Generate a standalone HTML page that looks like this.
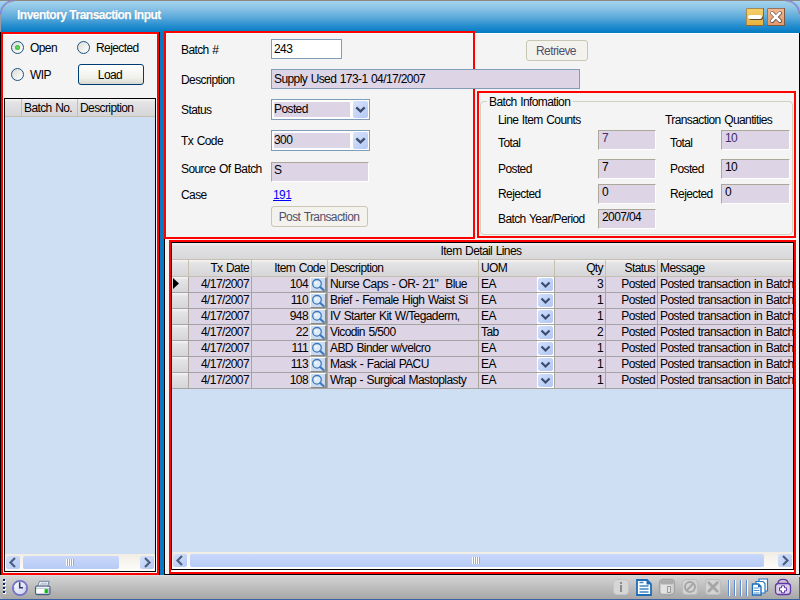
<!DOCTYPE html><html><head><meta charset="utf-8"><style>
*{margin:0;padding:0;box-sizing:border-box}
html,body{width:800px;height:600px;overflow:hidden;background:#0679c2}
body{position:relative;font-family:"Liberation Sans",sans-serif;font-size:11px;color:#000}
div,span,svg{position:absolute}
.t{white-space:pre;line-height:13px;height:13px;overflow:visible;letter-spacing:-0.6px;word-spacing:0.8px;font-size:12px}
</style></head><body>
<div style="left:0px;top:0px;width:800px;height:33px;background:linear-gradient(#a9d5f0 0px,#8cc4e6 8px,#58a8da 18px,#2a90d0 25px,#0a7fc6 31px,#0679c2 33px)"></div>
<div style="left:0px;top:0px;width:800px;height:1px;background:#8c8882"></div>
<div style="left:0px;top:13px;width:1px;height:19px;background:#9a9aa6"></div>
<svg style="left:0;top:0" width="800" height="33"><path d="M0.5 14 A13.5 13.5 0 0 1 14 0.5" stroke="#8080e8" stroke-width="1.2" fill="none"/><path d="M1.3 14 A12.7 12.7 0 0 1 14 1.3" stroke="#9a96a0" stroke-width="0.8" fill="none"/><path d="M786 0.5 A13.5 13.5 0 0 1 799.5 14" stroke="#8080e8" stroke-width="1.2" fill="none"/><path d="M786 1.3 A12.7 12.7 0 0 1 798.7 14" stroke="#9a96a0" stroke-width="0.8" fill="none"/></svg>
<div style="left:17px;top:9px;font-weight:bold;font-size:12px;letter-spacing:-0.5px;color:#fff;line-height:13px;white-space:pre;-webkit-text-stroke:0.25px #fff;text-shadow:0 0 1px #3070a0">Inventory Transaction Input</div>
<div style="left:746px;top:8px;width:18px;height:18px;background:linear-gradient(#f6cf6a,#e9b240);border:1px solid #a88a50;border-radius:1px"></div>
<div style="left:746px;top:8px;width:18px;height:18px;border-right:1px solid #8a6a30;border-bottom:1px solid #8a6a30"></div>
<div style="left:748px;top:15px;width:14px;height:4px;background:#fff;border-radius:2px;box-shadow:1px 1px 0 #5a4a30"></div>
<div style="left:767px;top:8px;width:18px;height:18px;background:linear-gradient(#f2b98f,#e39a6b);border:1px solid #9a7060;border-radius:1px"></div>
<div style="left:767px;top:8px;width:18px;height:18px;border-right:1px solid #7a5a44;border-bottom:1px solid #7a5a44"></div>
<svg style="left:767px;top:8px" width="18" height="18"><path d="M5.2 5.2 L13 13 M13 5.2 L5.2 13" stroke="#5e4e4a" stroke-width="4" stroke-linecap="round"/><path d="M5 5 L12.8 12.8 M12.8 5 L5 12.8" stroke="#fff" stroke-width="2.6" stroke-linecap="round"/></svg>
<div style="left:0px;top:32px;width:160px;height:543px;background:#f4f4f4"></div>
<div style="left:0px;top:32px;width:1px;height:543px;background:#000"></div>
<div style="left:159px;top:32px;width:1px;height:543px;background:#000"></div>
<div style="left:1px;top:32px;width:158px;height:2px;background:#ff0000"></div>
<div style="left:1px;top:573px;width:158px;height:2px;background:#ff0000"></div>
<div style="left:1px;top:32px;width:2px;height:543px;background:#ff0000"></div>
<div style="left:157px;top:32px;width:2px;height:543px;background:#ff0000"></div>
<div style="left:3px;top:34px;width:154px;height:1px;background:#fff"></div>
<div style="left:3px;top:34px;width:1px;height:538px;background:#fff"></div>
<div style="left:11px;top:41px;width:13px;height:13px;border-radius:50%;border:1px solid #1c5180;background:linear-gradient(135deg,#dcdcd6,#fff)"></div>
<div style="left:15px;top:45px;width:5px;height:5px;border-radius:50%;background:radial-gradient(#6fe06f,#21a121)"></div>
<div class="t" style="left:30px;top:42px;">Open</div>
<div style="left:77px;top:41px;width:13px;height:13px;border-radius:50%;border:1px solid #1c5180;background:linear-gradient(135deg,#dcdcd6,#fff)"></div>
<div class="t" style="left:96px;top:42px;">Rejected</div>
<div style="left:11px;top:68px;width:13px;height:13px;border-radius:50%;border:1px solid #1c5180;background:linear-gradient(135deg,#dcdcd6,#fff)"></div>
<div class="t" style="left:30px;top:69px;">WIP</div>
<div style="left:78px;top:64px;width:66px;height:21px;border:1px solid #003c74;border-radius:3px;background:linear-gradient(#fff,#f0f0ea 70%,#d8d8d0)"></div>
<div class="t" style="left:-40px;width:300px;text-align:center;top:69px;">Load</div>
<div style="left:4px;top:98px;width:152px;height:474px;background:#000"></div>
<div style="left:5px;top:99px;width:150px;height:472px;background:#cfdff3"></div>
<div style="left:5px;top:99px;width:150px;height:17px;background:linear-gradient(#f6f6f6 0px,#e4e4e6 3px,#d6d6d8 17px)"></div>
<div style="left:5px;top:116px;width:150px;height:1px;background:#c5bfaf"></div>
<div style="left:21px;top:99px;width:1px;height:17px;background:#c5bfaf"></div>
<div style="left:77px;top:99px;width:1px;height:17px;background:#c5bfaf"></div>
<div class="t" style="left:24px;top:102px;">Batch No.</div>
<div class="t" style="left:80px;top:102px;">Description</div>
<div style="left:5px;top:554px;width:150px;height:17px;background:linear-gradient(#f1ede4,#fdfdfa)"></div>
<div style="left:6px;top:556px;width:14px;height:13px;border-radius:2px;background:linear-gradient(135deg,#d5e1fb,#b4c9f3)"></div>
<svg style="left:6px;top:556px" width="14" height="13"><path d="M9 2 L4.5 6.5 L9 11" stroke="#4d5f80" stroke-width="2.2" fill="none"/></svg>
<div style="left:140px;top:556px;width:14px;height:13px;border-radius:2px;background:linear-gradient(135deg,#d5e1fb,#b4c9f3)"></div>
<svg style="left:140px;top:556px" width="14" height="13"><path d="M5 2 L9.5 6.5 L5 11" stroke="#4d5f80" stroke-width="2.2" fill="none"/></svg>
<div style="left:23px;top:556px;width:96px;height:13px;border-radius:2px;background:linear-gradient(#c9d7fa,#b6cbf5)"></div>
<div style="left:66px;top:559px;width:1px;height:7px;background:#fff"></div>
<div style="left:67px;top:559px;width:1px;height:7px;background:#8caee8"></div>
<div style="left:68px;top:559px;width:1px;height:7px;background:#fff"></div>
<div style="left:69px;top:559px;width:1px;height:7px;background:#8caee8"></div>
<div style="left:70px;top:559px;width:1px;height:7px;background:#fff"></div>
<div style="left:71px;top:559px;width:1px;height:7px;background:#8caee8"></div>
<div style="left:72px;top:559px;width:1px;height:7px;background:#fff"></div>
<div style="left:73px;top:559px;width:1px;height:7px;background:#8caee8"></div>
<div style="left:164px;top:33px;width:636px;height:542px;background:#f4f4f4"></div>
<div style="left:164px;top:239px;width:1px;height:336px;background:#000"></div>
<div style="left:799px;top:33px;width:1px;height:542px;background:#000"></div>
<div style="left:164px;top:574px;width:636px;height:1px;background:#000"></div>
<div style="left:475px;top:33px;width:324px;height:1px;background:#fbfdfd"></div>
<div style="left:164px;top:31px;width:311px;height:2px;background:#ff0000"></div>
<div style="left:164px;top:237px;width:311px;height:2px;background:#ff0000"></div>
<div style="left:164px;top:31px;width:2px;height:208px;background:#ff0000"></div>
<div style="left:473px;top:31px;width:2px;height:208px;background:#ff0000"></div>
<div style="left:166px;top:33px;width:307px;height:1px;background:#fbfdfd"></div>
<div style="left:166px;top:33px;width:1px;height:204px;background:#fbfdfd"></div>
<div class="t" style="left:181px;top:44px;">Batch #</div>
<div style="left:271px;top:39px;width:71px;height:20px;background:#fff;border:1px solid #7f9db9"></div>
<div class="t" style="left:274px;top:43px;">243</div>
<div class="t" style="left:181px;top:74px;">Description</div>
<div style="left:271px;top:69px;width:309px;height:20px;background:#ddd4e6;border:1px solid #7f9db9"></div>
<div class="t" style="left:274px;top:73px;">Supply Used 173-1 04/17/2007</div>
<div class="t" style="left:181px;top:104px;">Status</div>
<div style="left:271px;top:99px;width:99px;height:21px;background:#fff;border:1px solid #7f9db9"></div>
<div style="left:274px;top:102px;width:76px;height:15px;background:#ddd4e6"></div>
<div style="left:353px;top:101px;width:15px;height:17px;border-radius:2px;background:linear-gradient(135deg,#d9e4fb,#b3c8f4)"></div>
<svg style="left:353px;top:101px" width="15" height="17"><path d="M3.3 6.3 L7.5 10.3 L11.7 6.3" stroke="#3d4d6d" stroke-width="2.3" fill="none"/></svg>
<div class="t" style="left:274px;top:103px;">Posted</div>
<div class="t" style="left:181px;top:135px;">Tx Code</div>
<div style="left:271px;top:130px;width:99px;height:21px;background:#fff;border:1px solid #7f9db9"></div>
<div style="left:274px;top:133px;width:76px;height:15px;background:#ddd4e6"></div>
<div style="left:353px;top:132px;width:15px;height:17px;border-radius:2px;background:linear-gradient(135deg,#d9e4fb,#b3c8f4)"></div>
<svg style="left:353px;top:132px" width="15" height="17"><path d="M3.3 6.3 L7.5 10.3 L11.7 6.3" stroke="#3d4d6d" stroke-width="2.3" fill="none"/></svg>
<div class="t" style="left:274px;top:134px;">300</div>
<div class="t" style="left:181px;top:163px;">Source Of Batch</div>
<div style="left:271px;top:162px;width:98px;height:20px;background:#ddd4e6;border-top:1px solid #aca899;border-left:1px solid #aca899;border-bottom:1px solid #fff;border-right:1px solid #fff"></div>
<div class="t" style="left:274px;top:164px;">S</div>
<div class="t" style="left:181px;top:189px;">Case</div>
<div class="t" style="left:273px;top:189px;color:#0000ff;text-decoration:underline">191</div>
<div style="left:271px;top:206px;width:97px;height:21px;border:1px solid #c9c6b4;border-radius:3px;background:#f3f2ec"></div>
<div class="t" style="left:169px;width:300px;text-align:center;top:211px;color:#50506c">Post Transaction</div>
<div style="left:526px;top:40px;width:62px;height:21px;border:1px solid #c9c6b4;border-radius:3px;background:#f3f2ec"></div>
<div class="t" style="left:406px;width:300px;text-align:center;top:45px;color:#50506c">Retrieve</div>
<div style="left:477px;top:91px;width:319px;height:2px;background:#ff0000"></div>
<div style="left:477px;top:236px;width:319px;height:2px;background:#ff0000"></div>
<div style="left:477px;top:91px;width:2px;height:147px;background:#ff0000"></div>
<div style="left:794px;top:91px;width:2px;height:147px;background:#ff0000"></div>
<div style="left:480px;top:101px;width:313px;height:134px;border:1px solid #d0d0bf;border-radius:4px"></div>
<div style="left:487px;top:96px;width:86px;height:10px;background:#f4f4f4"></div>
<div class="t" style="left:489px;top:96px;">Batch Infomation</div>
<div class="t" style="left:498px;top:114px;">Line Item Counts</div>
<div class="t" style="left:665px;top:114px;">Transaction Quantities</div>
<div class="t" style="left:498px;top:137px;">Total</div>
<div style="left:598px;top:130px;width:58px;height:20px;background:#ddd4e6;border-top:1px solid #aca899;border-left:1px solid #aca899;border-bottom:1px solid #fff;border-right:1px solid #fff"></div>
<div class="t" style="left:602px;top:132px;color:#402e70">7</div>
<div class="t" style="left:498px;top:163px;">Posted</div>
<div style="left:598px;top:159px;width:58px;height:20px;background:#ddd4e6;border-top:1px solid #aca899;border-left:1px solid #aca899;border-bottom:1px solid #fff;border-right:1px solid #fff"></div>
<div class="t" style="left:602px;top:161px;color:#000">7</div>
<div class="t" style="left:498px;top:188px;">Rejected</div>
<div style="left:598px;top:184px;width:58px;height:20px;background:#ddd4e6;border-top:1px solid #aca899;border-left:1px solid #aca899;border-bottom:1px solid #fff;border-right:1px solid #fff"></div>
<div class="t" style="left:602px;top:186px;color:#000">0</div>
<div class="t" style="left:498px;top:213px;">Batch Year/Period</div>
<div style="left:598px;top:209px;width:58px;height:20px;background:#ddd4e6;border-top:1px solid #aca899;border-left:1px solid #aca899;border-bottom:1px solid #fff;border-right:1px solid #fff"></div>
<div class="t" style="left:602px;top:211px;color:#000">2007/04</div>
<div class="t" style="left:670px;top:137px;">Total</div>
<div style="left:721px;top:130px;width:69px;height:20px;background:#ddd4e6;border-top:1px solid #aca899;border-left:1px solid #aca899;border-bottom:1px solid #fff;border-right:1px solid #fff"></div>
<div class="t" style="left:725px;top:132px;color:#402e70">10</div>
<div class="t" style="left:670px;top:163px;">Posted</div>
<div style="left:721px;top:159px;width:69px;height:20px;background:#ddd4e6;border-top:1px solid #aca899;border-left:1px solid #aca899;border-bottom:1px solid #fff;border-right:1px solid #fff"></div>
<div class="t" style="left:725px;top:161px;color:#000">10</div>
<div class="t" style="left:670px;top:188px;">Rejected</div>
<div style="left:721px;top:184px;width:69px;height:20px;background:#ddd4e6;border-top:1px solid #aca899;border-left:1px solid #aca899;border-bottom:1px solid #fff;border-right:1px solid #fff"></div>
<div class="t" style="left:725px;top:186px;color:#000">0</div>
<div style="left:169px;top:240px;width:627px;height:2px;background:#ff0000"></div>
<div style="left:169px;top:572px;width:627px;height:2px;background:#ff0000"></div>
<div style="left:169px;top:240px;width:2px;height:334px;background:#ff0000"></div>
<div style="left:794px;top:240px;width:2px;height:334px;background:#ff0000"></div>
<div style="left:171px;top:570px;width:623px;height:2px;background:#fff"></div>
<div style="left:171px;top:242px;width:623px;height:328px;background:#000"></div>
<div style="left:172px;top:243px;width:621px;height:326px;background:#cfdff3"></div>
<div style="left:172px;top:243px;width:621px;height:16px;background:linear-gradient(#f2f2f2 0px,#e2e2e4 3px,#d8d8da 16px)"></div>
<div style="left:172px;top:259px;width:621px;height:1px;background:#c5bfaf"></div>
<div class="t" style="left:331px;width:300px;text-align:center;top:245px;">Item Detail Lines</div>
<div style="left:172px;top:260px;width:621px;height:16px;background:linear-gradient(#f6f6f6 0px,#e4e4e6 3px,#d6d6d8 16px)"></div>
<div style="left:172px;top:276px;width:621px;height:1px;background:#c5bfaf"></div>
<div style="left:188px;top:260px;width:1px;height:17px;background:#c5bfaf"></div>
<div style="left:251px;top:260px;width:1px;height:17px;background:#c5bfaf"></div>
<div style="left:327px;top:260px;width:1px;height:17px;background:#c5bfaf"></div>
<div style="left:478px;top:260px;width:1px;height:17px;background:#c5bfaf"></div>
<div style="left:554px;top:260px;width:1px;height:17px;background:#c5bfaf"></div>
<div style="left:605px;top:260px;width:1px;height:17px;background:#c5bfaf"></div>
<div style="left:657px;top:260px;width:1px;height:17px;background:#c5bfaf"></div>
<div class="t" style="left:-51px;width:300px;text-align:right;top:262px;">Tx Date</div>
<div class="t" style="left:25px;width:300px;text-align:right;top:262px;">Item Code</div>
<div class="t" style="left:330px;top:262px;">Description</div>
<div class="t" style="left:481px;top:262px;">UOM</div>
<div class="t" style="left:303px;width:300px;text-align:right;top:262px;">Qty</div>
<div class="t" style="left:355px;width:300px;text-align:right;top:262px;">Status</div>
<div class="t" style="left:660px;top:262px;">Message</div>
<div style="left:172px;top:277px;width:16px;height:15px;background:linear-gradient(#f6f6f6 0px,#e4e4e6 3px,#d6d6d8 15px)"></div>
<div style="left:188px;top:277px;width:605px;height:15px;background:#ddd4e6"></div>
<div style="left:172px;top:292px;width:621px;height:1px;background:#a4a4a4"></div>
<div style="left:188px;top:277px;width:1px;height:16px;background:#a8a69c"></div>
<div style="left:251px;top:277px;width:1px;height:16px;background:#a8a69c"></div>
<div style="left:327px;top:277px;width:1px;height:16px;background:#a8a69c"></div>
<div style="left:478px;top:277px;width:1px;height:16px;background:#a8a69c"></div>
<div style="left:554px;top:277px;width:1px;height:16px;background:#a8a69c"></div>
<div style="left:605px;top:277px;width:1px;height:16px;background:#a8a69c"></div>
<div style="left:657px;top:277px;width:1px;height:16px;background:#a8a69c"></div>
<div class="t" style="left:-51px;width:300px;text-align:right;top:278px;">4/17/2007</div>
<div class="t" style="left:8px;width:300px;text-align:right;top:278px;">104</div>
<div style="left:310px;top:277px;width:17px;height:15px;background:#c9dcf3;border-top:1px solid #fbfaf2;border-left:1px solid #fbfaf2;border-right:2px solid #8c8a80;border-bottom:1px solid #8c8a80"></div>
<svg style="left:310px;top:277px" width="17" height="15"><circle cx="7" cy="6.8" r="4.3" stroke="#4077b8" stroke-width="1.3" fill="#dcebf8"/><circle cx="5.6" cy="5.8" r="1" fill="#fff"/><path d="M10.2 10 L13.6 13" stroke="#4077b8" stroke-width="2.2" stroke-linecap="round"/></svg>
<div class="t" style="left:330px;top:278px;">Nurse Caps - OR- 21"  Blue</div>
<div class="t" style="left:481px;top:278px;">EA</div>
<div style="left:537px;top:277px;width:17px;height:15px;background:#fff"></div>
<div style="left:538px;top:278px;width:15px;height:13px;border-radius:2px;background:linear-gradient(135deg,#d3e0fb,#b0c6f3)"></div>
<svg style="left:538px;top:278px" width="15" height="13"><path d="M3.5 4.5 L7.5 8.5 L11.5 4.5" stroke="#3d4d6d" stroke-width="2.2" fill="none"/></svg>
<div class="t" style="left:303px;width:300px;text-align:right;top:278px;">3</div>
<div class="t" style="left:355px;width:300px;text-align:right;top:278px;">Posted</div>
<div style="left:658px;top:277px;width:135px;height:15px;overflow:hidden"><div class="t" style="left:2px;top:1px;letter-spacing:-0.55px">Posted transaction in Batch 243</div></div>
<div style="left:172px;top:293px;width:16px;height:15px;background:linear-gradient(#f6f6f6 0px,#e4e4e6 3px,#d6d6d8 15px)"></div>
<div style="left:188px;top:293px;width:605px;height:15px;background:#ddd4e6"></div>
<div style="left:172px;top:308px;width:621px;height:1px;background:#a4a4a4"></div>
<div style="left:188px;top:293px;width:1px;height:16px;background:#a8a69c"></div>
<div style="left:251px;top:293px;width:1px;height:16px;background:#a8a69c"></div>
<div style="left:327px;top:293px;width:1px;height:16px;background:#a8a69c"></div>
<div style="left:478px;top:293px;width:1px;height:16px;background:#a8a69c"></div>
<div style="left:554px;top:293px;width:1px;height:16px;background:#a8a69c"></div>
<div style="left:605px;top:293px;width:1px;height:16px;background:#a8a69c"></div>
<div style="left:657px;top:293px;width:1px;height:16px;background:#a8a69c"></div>
<div class="t" style="left:-51px;width:300px;text-align:right;top:294px;">4/17/2007</div>
<div class="t" style="left:8px;width:300px;text-align:right;top:294px;">110</div>
<div style="left:310px;top:293px;width:17px;height:15px;background:#c9dcf3;border-top:1px solid #fbfaf2;border-left:1px solid #fbfaf2;border-right:2px solid #8c8a80;border-bottom:1px solid #8c8a80"></div>
<svg style="left:310px;top:293px" width="17" height="15"><circle cx="7" cy="6.8" r="4.3" stroke="#4077b8" stroke-width="1.3" fill="#dcebf8"/><circle cx="5.6" cy="5.8" r="1" fill="#fff"/><path d="M10.2 10 L13.6 13" stroke="#4077b8" stroke-width="2.2" stroke-linecap="round"/></svg>
<div class="t" style="left:330px;top:294px;">Brief - Female High Waist Si</div>
<div class="t" style="left:481px;top:294px;">EA</div>
<div style="left:537px;top:293px;width:17px;height:15px;background:#fff"></div>
<div style="left:538px;top:294px;width:15px;height:13px;border-radius:2px;background:linear-gradient(135deg,#d3e0fb,#b0c6f3)"></div>
<svg style="left:538px;top:294px" width="15" height="13"><path d="M3.5 4.5 L7.5 8.5 L11.5 4.5" stroke="#3d4d6d" stroke-width="2.2" fill="none"/></svg>
<div class="t" style="left:303px;width:300px;text-align:right;top:294px;">1</div>
<div class="t" style="left:355px;width:300px;text-align:right;top:294px;">Posted</div>
<div style="left:658px;top:293px;width:135px;height:15px;overflow:hidden"><div class="t" style="left:2px;top:1px;letter-spacing:-0.55px">Posted transaction in Batch 243</div></div>
<div style="left:172px;top:309px;width:16px;height:15px;background:linear-gradient(#f6f6f6 0px,#e4e4e6 3px,#d6d6d8 15px)"></div>
<div style="left:188px;top:309px;width:605px;height:15px;background:#ddd4e6"></div>
<div style="left:172px;top:324px;width:621px;height:1px;background:#a4a4a4"></div>
<div style="left:188px;top:309px;width:1px;height:16px;background:#a8a69c"></div>
<div style="left:251px;top:309px;width:1px;height:16px;background:#a8a69c"></div>
<div style="left:327px;top:309px;width:1px;height:16px;background:#a8a69c"></div>
<div style="left:478px;top:309px;width:1px;height:16px;background:#a8a69c"></div>
<div style="left:554px;top:309px;width:1px;height:16px;background:#a8a69c"></div>
<div style="left:605px;top:309px;width:1px;height:16px;background:#a8a69c"></div>
<div style="left:657px;top:309px;width:1px;height:16px;background:#a8a69c"></div>
<div class="t" style="left:-51px;width:300px;text-align:right;top:310px;">4/17/2007</div>
<div class="t" style="left:8px;width:300px;text-align:right;top:310px;">948</div>
<div style="left:310px;top:309px;width:17px;height:15px;background:#c9dcf3;border-top:1px solid #fbfaf2;border-left:1px solid #fbfaf2;border-right:2px solid #8c8a80;border-bottom:1px solid #8c8a80"></div>
<svg style="left:310px;top:309px" width="17" height="15"><circle cx="7" cy="6.8" r="4.3" stroke="#4077b8" stroke-width="1.3" fill="#dcebf8"/><circle cx="5.6" cy="5.8" r="1" fill="#fff"/><path d="M10.2 10 L13.6 13" stroke="#4077b8" stroke-width="2.2" stroke-linecap="round"/></svg>
<div class="t" style="left:330px;top:310px;">IV Starter Kit W/Tegaderm,</div>
<div class="t" style="left:481px;top:310px;">EA</div>
<div style="left:537px;top:309px;width:17px;height:15px;background:#fff"></div>
<div style="left:538px;top:310px;width:15px;height:13px;border-radius:2px;background:linear-gradient(135deg,#d3e0fb,#b0c6f3)"></div>
<svg style="left:538px;top:310px" width="15" height="13"><path d="M3.5 4.5 L7.5 8.5 L11.5 4.5" stroke="#3d4d6d" stroke-width="2.2" fill="none"/></svg>
<div class="t" style="left:303px;width:300px;text-align:right;top:310px;">1</div>
<div class="t" style="left:355px;width:300px;text-align:right;top:310px;">Posted</div>
<div style="left:658px;top:309px;width:135px;height:15px;overflow:hidden"><div class="t" style="left:2px;top:1px;letter-spacing:-0.55px">Posted transaction in Batch 243</div></div>
<div style="left:172px;top:325px;width:16px;height:15px;background:linear-gradient(#f6f6f6 0px,#e4e4e6 3px,#d6d6d8 15px)"></div>
<div style="left:188px;top:325px;width:605px;height:15px;background:#ddd4e6"></div>
<div style="left:172px;top:340px;width:621px;height:1px;background:#a4a4a4"></div>
<div style="left:188px;top:325px;width:1px;height:16px;background:#a8a69c"></div>
<div style="left:251px;top:325px;width:1px;height:16px;background:#a8a69c"></div>
<div style="left:327px;top:325px;width:1px;height:16px;background:#a8a69c"></div>
<div style="left:478px;top:325px;width:1px;height:16px;background:#a8a69c"></div>
<div style="left:554px;top:325px;width:1px;height:16px;background:#a8a69c"></div>
<div style="left:605px;top:325px;width:1px;height:16px;background:#a8a69c"></div>
<div style="left:657px;top:325px;width:1px;height:16px;background:#a8a69c"></div>
<div class="t" style="left:-51px;width:300px;text-align:right;top:326px;">4/17/2007</div>
<div class="t" style="left:8px;width:300px;text-align:right;top:326px;">22</div>
<div style="left:310px;top:325px;width:17px;height:15px;background:#c9dcf3;border-top:1px solid #fbfaf2;border-left:1px solid #fbfaf2;border-right:2px solid #8c8a80;border-bottom:1px solid #8c8a80"></div>
<svg style="left:310px;top:325px" width="17" height="15"><circle cx="7" cy="6.8" r="4.3" stroke="#4077b8" stroke-width="1.3" fill="#dcebf8"/><circle cx="5.6" cy="5.8" r="1" fill="#fff"/><path d="M10.2 10 L13.6 13" stroke="#4077b8" stroke-width="2.2" stroke-linecap="round"/></svg>
<div class="t" style="left:330px;top:326px;">Vicodin 5/500</div>
<div class="t" style="left:481px;top:326px;">Tab</div>
<div style="left:537px;top:325px;width:17px;height:15px;background:#fff"></div>
<div style="left:538px;top:326px;width:15px;height:13px;border-radius:2px;background:linear-gradient(135deg,#d3e0fb,#b0c6f3)"></div>
<svg style="left:538px;top:326px" width="15" height="13"><path d="M3.5 4.5 L7.5 8.5 L11.5 4.5" stroke="#3d4d6d" stroke-width="2.2" fill="none"/></svg>
<div class="t" style="left:303px;width:300px;text-align:right;top:326px;">2</div>
<div class="t" style="left:355px;width:300px;text-align:right;top:326px;">Posted</div>
<div style="left:658px;top:325px;width:135px;height:15px;overflow:hidden"><div class="t" style="left:2px;top:1px;letter-spacing:-0.55px">Posted transaction in Batch 243</div></div>
<div style="left:172px;top:341px;width:16px;height:15px;background:linear-gradient(#f6f6f6 0px,#e4e4e6 3px,#d6d6d8 15px)"></div>
<div style="left:188px;top:341px;width:605px;height:15px;background:#ddd4e6"></div>
<div style="left:172px;top:356px;width:621px;height:1px;background:#a4a4a4"></div>
<div style="left:188px;top:341px;width:1px;height:16px;background:#a8a69c"></div>
<div style="left:251px;top:341px;width:1px;height:16px;background:#a8a69c"></div>
<div style="left:327px;top:341px;width:1px;height:16px;background:#a8a69c"></div>
<div style="left:478px;top:341px;width:1px;height:16px;background:#a8a69c"></div>
<div style="left:554px;top:341px;width:1px;height:16px;background:#a8a69c"></div>
<div style="left:605px;top:341px;width:1px;height:16px;background:#a8a69c"></div>
<div style="left:657px;top:341px;width:1px;height:16px;background:#a8a69c"></div>
<div class="t" style="left:-51px;width:300px;text-align:right;top:342px;">4/17/2007</div>
<div class="t" style="left:8px;width:300px;text-align:right;top:342px;">111</div>
<div style="left:310px;top:341px;width:17px;height:15px;background:#c9dcf3;border-top:1px solid #fbfaf2;border-left:1px solid #fbfaf2;border-right:2px solid #8c8a80;border-bottom:1px solid #8c8a80"></div>
<svg style="left:310px;top:341px" width="17" height="15"><circle cx="7" cy="6.8" r="4.3" stroke="#4077b8" stroke-width="1.3" fill="#dcebf8"/><circle cx="5.6" cy="5.8" r="1" fill="#fff"/><path d="M10.2 10 L13.6 13" stroke="#4077b8" stroke-width="2.2" stroke-linecap="round"/></svg>
<div class="t" style="left:330px;top:342px;">ABD Binder w/velcro</div>
<div class="t" style="left:481px;top:342px;">EA</div>
<div style="left:537px;top:341px;width:17px;height:15px;background:#fff"></div>
<div style="left:538px;top:342px;width:15px;height:13px;border-radius:2px;background:linear-gradient(135deg,#d3e0fb,#b0c6f3)"></div>
<svg style="left:538px;top:342px" width="15" height="13"><path d="M3.5 4.5 L7.5 8.5 L11.5 4.5" stroke="#3d4d6d" stroke-width="2.2" fill="none"/></svg>
<div class="t" style="left:303px;width:300px;text-align:right;top:342px;">1</div>
<div class="t" style="left:355px;width:300px;text-align:right;top:342px;">Posted</div>
<div style="left:658px;top:341px;width:135px;height:15px;overflow:hidden"><div class="t" style="left:2px;top:1px;letter-spacing:-0.55px">Posted transaction in Batch 243</div></div>
<div style="left:172px;top:357px;width:16px;height:15px;background:linear-gradient(#f6f6f6 0px,#e4e4e6 3px,#d6d6d8 15px)"></div>
<div style="left:188px;top:357px;width:605px;height:15px;background:#ddd4e6"></div>
<div style="left:172px;top:372px;width:621px;height:1px;background:#a4a4a4"></div>
<div style="left:188px;top:357px;width:1px;height:16px;background:#a8a69c"></div>
<div style="left:251px;top:357px;width:1px;height:16px;background:#a8a69c"></div>
<div style="left:327px;top:357px;width:1px;height:16px;background:#a8a69c"></div>
<div style="left:478px;top:357px;width:1px;height:16px;background:#a8a69c"></div>
<div style="left:554px;top:357px;width:1px;height:16px;background:#a8a69c"></div>
<div style="left:605px;top:357px;width:1px;height:16px;background:#a8a69c"></div>
<div style="left:657px;top:357px;width:1px;height:16px;background:#a8a69c"></div>
<div class="t" style="left:-51px;width:300px;text-align:right;top:358px;">4/17/2007</div>
<div class="t" style="left:8px;width:300px;text-align:right;top:358px;">113</div>
<div style="left:310px;top:357px;width:17px;height:15px;background:#c9dcf3;border-top:1px solid #fbfaf2;border-left:1px solid #fbfaf2;border-right:2px solid #8c8a80;border-bottom:1px solid #8c8a80"></div>
<svg style="left:310px;top:357px" width="17" height="15"><circle cx="7" cy="6.8" r="4.3" stroke="#4077b8" stroke-width="1.3" fill="#dcebf8"/><circle cx="5.6" cy="5.8" r="1" fill="#fff"/><path d="M10.2 10 L13.6 13" stroke="#4077b8" stroke-width="2.2" stroke-linecap="round"/></svg>
<div class="t" style="left:330px;top:358px;">Mask - Facial PACU</div>
<div class="t" style="left:481px;top:358px;">EA</div>
<div style="left:537px;top:357px;width:17px;height:15px;background:#fff"></div>
<div style="left:538px;top:358px;width:15px;height:13px;border-radius:2px;background:linear-gradient(135deg,#d3e0fb,#b0c6f3)"></div>
<svg style="left:538px;top:358px" width="15" height="13"><path d="M3.5 4.5 L7.5 8.5 L11.5 4.5" stroke="#3d4d6d" stroke-width="2.2" fill="none"/></svg>
<div class="t" style="left:303px;width:300px;text-align:right;top:358px;">1</div>
<div class="t" style="left:355px;width:300px;text-align:right;top:358px;">Posted</div>
<div style="left:658px;top:357px;width:135px;height:15px;overflow:hidden"><div class="t" style="left:2px;top:1px;letter-spacing:-0.55px">Posted transaction in Batch 243</div></div>
<div style="left:172px;top:373px;width:16px;height:15px;background:linear-gradient(#f6f6f6 0px,#e4e4e6 3px,#d6d6d8 15px)"></div>
<div style="left:188px;top:373px;width:605px;height:15px;background:#ddd4e6"></div>
<div style="left:172px;top:388px;width:621px;height:1px;background:#a4a4a4"></div>
<div style="left:188px;top:373px;width:1px;height:16px;background:#a8a69c"></div>
<div style="left:251px;top:373px;width:1px;height:16px;background:#a8a69c"></div>
<div style="left:327px;top:373px;width:1px;height:16px;background:#a8a69c"></div>
<div style="left:478px;top:373px;width:1px;height:16px;background:#a8a69c"></div>
<div style="left:554px;top:373px;width:1px;height:16px;background:#a8a69c"></div>
<div style="left:605px;top:373px;width:1px;height:16px;background:#a8a69c"></div>
<div style="left:657px;top:373px;width:1px;height:16px;background:#a8a69c"></div>
<div class="t" style="left:-51px;width:300px;text-align:right;top:374px;">4/17/2007</div>
<div class="t" style="left:8px;width:300px;text-align:right;top:374px;">108</div>
<div style="left:310px;top:373px;width:17px;height:15px;background:#c9dcf3;border-top:1px solid #fbfaf2;border-left:1px solid #fbfaf2;border-right:2px solid #8c8a80;border-bottom:1px solid #8c8a80"></div>
<svg style="left:310px;top:373px" width="17" height="15"><circle cx="7" cy="6.8" r="4.3" stroke="#4077b8" stroke-width="1.3" fill="#dcebf8"/><circle cx="5.6" cy="5.8" r="1" fill="#fff"/><path d="M10.2 10 L13.6 13" stroke="#4077b8" stroke-width="2.2" stroke-linecap="round"/></svg>
<div class="t" style="left:330px;top:374px;">Wrap - Surgical Mastoplasty</div>
<div class="t" style="left:481px;top:374px;">EA</div>
<div style="left:537px;top:373px;width:17px;height:15px;background:#fff"></div>
<div style="left:538px;top:374px;width:15px;height:13px;border-radius:2px;background:linear-gradient(135deg,#d3e0fb,#b0c6f3)"></div>
<svg style="left:538px;top:374px" width="15" height="13"><path d="M3.5 4.5 L7.5 8.5 L11.5 4.5" stroke="#3d4d6d" stroke-width="2.2" fill="none"/></svg>
<div class="t" style="left:303px;width:300px;text-align:right;top:374px;">1</div>
<div class="t" style="left:355px;width:300px;text-align:right;top:374px;">Posted</div>
<div style="left:658px;top:373px;width:135px;height:15px;overflow:hidden"><div class="t" style="left:2px;top:1px;letter-spacing:-0.55px">Posted transaction in Batch 243</div></div>
<svg style="left:173px;top:278px" width="8" height="12"><path d="M0 0 L6 5.5 L0 11 Z" fill="#000"/></svg>
<div style="left:172px;top:552px;width:621px;height:17px;background:linear-gradient(#f1ede4,#fdfdfa)"></div>
<div style="left:173px;top:554px;width:14px;height:13px;border-radius:2px;background:linear-gradient(135deg,#d5e1fb,#b4c9f3)"></div>
<svg style="left:173px;top:554px" width="14" height="13"><path d="M9 2 L4.5 6.5 L9 11" stroke="#4d5f80" stroke-width="2.2" fill="none"/></svg>
<div style="left:778px;top:554px;width:14px;height:13px;border-radius:2px;background:linear-gradient(135deg,#d5e1fb,#b4c9f3)"></div>
<svg style="left:778px;top:554px" width="14" height="13"><path d="M5 2 L9.5 6.5 L5 11" stroke="#4d5f80" stroke-width="2.2" fill="none"/></svg>
<div style="left:190px;top:554px;width:574px;height:13px;border-radius:2px;background:linear-gradient(#c9d7fa,#b6cbf5)"></div>
<div style="left:472px;top:557px;width:1px;height:7px;background:#fff"></div>
<div style="left:473px;top:557px;width:1px;height:7px;background:#8caee8"></div>
<div style="left:474px;top:557px;width:1px;height:7px;background:#fff"></div>
<div style="left:475px;top:557px;width:1px;height:7px;background:#8caee8"></div>
<div style="left:476px;top:557px;width:1px;height:7px;background:#fff"></div>
<div style="left:477px;top:557px;width:1px;height:7px;background:#8caee8"></div>
<div style="left:478px;top:557px;width:1px;height:7px;background:#fff"></div>
<div style="left:479px;top:557px;width:1px;height:7px;background:#8caee8"></div>
<div style="left:0px;top:575px;width:800px;height:25px;background:linear-gradient(#e2e2e2 0px,#d4d4d4 1px,#a6a6a6 24px)"></div>
<div style="left:0px;top:599px;width:800px;height:1px;background:#3a60a6"></div>
<div style="left:3px;top:579px;width:2px;height:2px;background:#0a246a"></div>
<div style="left:5px;top:580px;width:1px;height:2px;background:#fff"></div>
<div style="left:3px;top:581px;width:3px;height:1px;background:#fff"></div>
<div style="left:3px;top:583px;width:2px;height:2px;background:#0a246a"></div>
<div style="left:5px;top:584px;width:1px;height:2px;background:#fff"></div>
<div style="left:3px;top:585px;width:3px;height:1px;background:#fff"></div>
<div style="left:3px;top:587px;width:2px;height:2px;background:#0a246a"></div>
<div style="left:5px;top:588px;width:1px;height:2px;background:#fff"></div>
<div style="left:3px;top:589px;width:3px;height:1px;background:#fff"></div>
<div style="left:3px;top:591px;width:2px;height:2px;background:#0a246a"></div>
<div style="left:5px;top:592px;width:1px;height:2px;background:#fff"></div>
<div style="left:3px;top:593px;width:3px;height:1px;background:#fff"></div>
<div style="left:0px;top:597px;width:1px;height:1px;background:#a8c8e8"></div>
<div style="left:1px;top:598px;width:1px;height:1px;background:#a8c8e8"></div>
<svg style="left:11px;top:579px" width="18" height="18"><defs><linearGradient id="cg" x1="0" y1="0" x2="1" y2="1"><stop offset="0" stop-color="#ffffff"/><stop offset="1" stop-color="#c8d0ec"/></linearGradient></defs><circle cx="9" cy="9" r="7.1" fill="url(#cg)" stroke="#7272c6" stroke-width="1.8"/><path d="M8.7 3.2 V8.7 H12" stroke="#35356f" stroke-width="1.5" fill="none"/><path d="M9 15 V16 M2.5 9 H3.5 M14.5 9 H15.5" stroke="#7070c0" stroke-width="1"/></svg>
<svg style="left:34px;top:580px" width="18" height="16"><path d="M5.5 1.3 H15.2 L13.6 6.5 H3.6 Z" fill="#fbfcfe" stroke="#6d7f9c" stroke-width="1"/><path d="M6.6 3.2 H13.4 M5.8 4.9 H12.7" stroke="#9aa8c0" stroke-width="0.9"/><rect x="1.5" y="6" width="14.5" height="8.6" rx="1.6" fill="#b8c4d8" stroke="#4b5d7d" stroke-width="1.1"/><path d="M2.2 7.6 H15.3" stroke="#eef2f8" stroke-width="1.3"/><rect x="2.3" y="9" width="8.7" height="4.2" fill="#ffffff"/><rect x="10.6" y="9.2" width="3.2" height="3.8" fill="#10c010"/></svg>
<div style="left:613px;top:579px;width:16px;height:16px;border:1px solid #c4c4c4;border-radius:4px;background:#d6d6d6"></div>
<div style="left:620px;top:582px;width:2px;height:2px;background:#8c8c8c"></div>
<div style="left:620px;top:585px;width:2px;height:7px;background:#8c8c8c"></div>
<svg style="left:636px;top:579px" width="16" height="17"><path d="M1 1 H11 L15 5 V16 H1 Z" fill="#ffffff" stroke="#1f6db8" stroke-width="1.8"/><path d="M10.5 1 L15 5.5 H10.5 Z" fill="#1f6db8"/><path d="M3.5 3.5 H7.5 M3.5 7 H12.5 M3.5 10 H12.5 M3.5 13 H12.5" stroke="#3c86c8" stroke-width="1.4"/></svg>
<svg style="left:658px;top:578px" width="18" height="18"><rect x="1.5" y="1.5" width="15" height="15" rx="3.5" fill="#d2d2d2" stroke="#a4a4a4" stroke-width="1.4"/><rect x="2.2" y="2.2" width="13.6" height="4" rx="2" fill="#acacac"/><rect x="3" y="7" width="10" height="8.5" fill="#e2e2e2"/><rect x="9.5" y="8.5" width="3" height="6" fill="none" stroke="#9a9a9a" stroke-width="1"/></svg>
<svg style="left:681px;top:578px" width="18" height="18"><rect x="1.5" y="1.5" width="15" height="15" rx="3.5" fill="#d4d4d4" stroke="#bdbdbd" stroke-width="1.2"/><circle cx="9" cy="9" r="5" fill="none" stroke="#a6a6a6" stroke-width="2"/><path d="M5.8 12.2 L12.2 5.8" stroke="#a6a6a6" stroke-width="2"/></svg>
<svg style="left:704px;top:578px" width="18" height="18"><rect x="1.5" y="1.5" width="15" height="15" rx="3.5" fill="#d4d4d4" stroke="#bdbdbd" stroke-width="1.2"/><path d="M4.8 4.8 L13.2 13.2 M13.2 4.8 L4.8 13.2" stroke="#a6a6a6" stroke-width="2.8" stroke-linecap="round"/></svg>
<div style="left:728px;top:580px;width:1px;height:16px;background:#5b8ad8"></div>
<div style="left:729px;top:580px;width:1px;height:16px;background:#ffffff"></div>
<div style="left:734px;top:580px;width:1px;height:16px;background:#5b8ad8"></div>
<div style="left:735px;top:580px;width:1px;height:16px;background:#ffffff"></div>
<div style="left:740px;top:580px;width:1px;height:16px;background:#5b8ad8"></div>
<div style="left:741px;top:580px;width:1px;height:16px;background:#ffffff"></div>
<div style="left:746px;top:580px;width:1px;height:16px;background:#5b8ad8"></div>
<div style="left:747px;top:580px;width:1px;height:16px;background:#ffffff"></div>
<svg style="left:751px;top:578px" width="18" height="18"><path d="M8 1 H16.5 V13 H8 Z" fill="#ffffff" stroke="#2a78c0" stroke-width="1.2"/><path d="M5 3.5 H12 L14 5.5 V15 H5 Z" fill="#ffffff" stroke="#2a78c0" stroke-width="1.2"/><path d="M1.5 6 H7.5 L10 8.5 V17 H1.5 Z" fill="#ffffff" stroke="#1f6db8" stroke-width="1.4"/><path d="M7 6 L10 9 H7 Z" fill="#1f6db8"/><path d="M3 10 H8.5 M3 12.5 H8.5 M3 15 H8.5" stroke="#4a90d0" stroke-width="1.1"/></svg>
<svg style="left:774px;top:578px" width="18" height="18"><path d="M3.8 6 Q3.8 1.4 9 1.4 Q14.2 1.4 14.2 6" fill="none" stroke="#6236a8" stroke-width="1.3"/><rect x="1.5" y="5.5" width="15" height="11" rx="3" fill="#d9d2e6" stroke="#6236a8" stroke-width="1.3"/><path d="M7.5 7.8 H10.5 V9.8 H12.5 V12.8 H10.5 V14.8 H7.5 V12.8 H5.5 V9.8 H7.5 Z" fill="#ffffff" stroke="#6236a8" stroke-width="1"/></svg>
<div style="left:799px;top:577px;width:1px;height:23px;background:#3a66ae"></div>
</body></html>
